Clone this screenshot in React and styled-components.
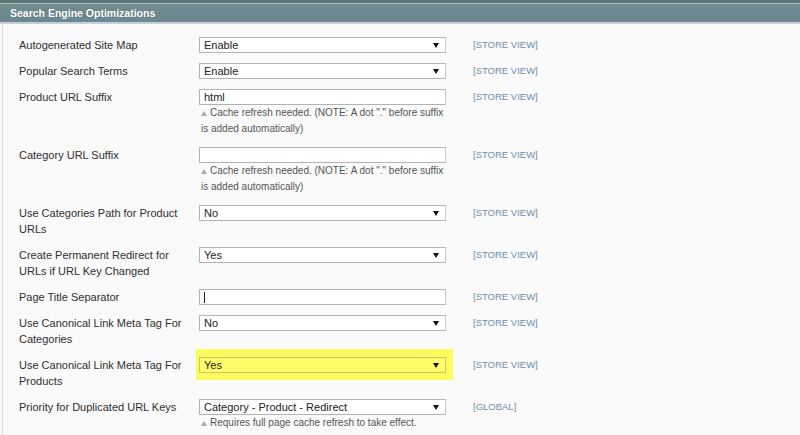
import React from 'react';
import styled, { createGlobalStyle } from 'styled-components';

const GlobalStyle = createGlobalStyle`
  html, body {
    margin: 0;
    padding: 0;
    background: #fafafa;
  }
  body {
    font-family: "Liberation Sans", Arial, sans-serif;
    width: 800px;
    height: 435px;
    overflow: hidden;
  }
`;

const Section = styled.div`
  width: 800px;
  height: 435px;
  display: flex;
  flex-direction: column;
`;

const Header = styled.div`
  height: 24px;
  box-sizing: border-box;
  background: linear-gradient(
    to bottom,
    #5b7579 0px,
    #5b7579 3px,
    #a9bcc0 3px,
    #a9bcc0 4px,
    #6f8b8d 4px,
    #6c8890 20px,
    #74869a 22px,
    #c6ced8 22px,
    #c6ced8 24px
  );
  color: #fff;
  font-weight: bold;
  font-size: 10.5px;
  line-height: 24px;
  padding: 1px 0 0 10px;
  text-shadow: 0 0 1px rgba(0, 0, 0, 0.25);
`;

const Body = styled.div`
  flex: 1;
  margin-left: 2px;
  border-left: 1px solid #dcdcdc;
  padding-top: 8px;
`;

const Row = styled.div`
  display: grid;
  grid-template-columns: 180px 247px 300px;
  padding: 5px 0 5px 16px;
  font-size: 11px;
  line-height: 16px;
  color: #2f2f2f;
`;

const Label = styled.div`
  padding-right: 10px;
`;

const ControlCell = styled.div`
  align-self: start;
  margin: ${(p) => (p.$highlight ? '-8px -7px -7px -3px' : '0')};
  padding: ${(p) => (p.$highlight ? '8px 7px 7px 3px' : '0')};
  background: ${(p) => (p.$highlight ? '#fbfb5e' : 'transparent')};
`;

const Field = styled.div`
  height: 16px;
  box-sizing: border-box;
  border: 1px solid #b3b3b3;
  border-right-color: #c8c8c8;
  background: #fff;
  display: flex;
  align-items: center;
  padding: 0 5px 0 4px;
  font-size: 11px;
  color: #222;
  ${(p) => p.$highlight && 'background: #fdfd6a; border-color: #c9c56a;'}
`;

const Value = styled.span`
  flex: 1;
  white-space: nowrap;
`;

const Arrow = styled.span`
  width: 0;
  height: 0;
  border-left: 3px solid transparent;
  border-right: 3px solid transparent;
  border-top: 5px solid #111;
  margin-right: 1px;
`;

const Caret = styled.span`
  width: 1px;
  height: 11px;
  background: #222;
`;

const Note = styled.div`
  padding-left: 2px;
  font-size: 10px;
  line-height: 16px;
  color: #555;
`;

const NoteIcon = styled.span`
  display: inline-block;
  width: 0;
  height: 0;
  border-left: 3px solid transparent;
  border-right: 3px solid transparent;
  border-bottom: 5px solid #aaa;
  margin-right: 3px;
`;

const Scope = styled.div`
  padding-left: 27px;
  font-size: 9.5px;
  line-height: 16px;
  color: #6f8daa;
`;

const rows = [
  { label: 'Autogenerated Site Map', type: 'select', value: 'Enable' },
  { label: 'Popular Search Terms', type: 'select', value: 'Enable' },
  {
    label: 'Product URL Suffix',
    type: 'input',
    value: 'html',
    note: ['Cache refresh needed. (NOTE: A dot "." before suffix', 'is added automatically)'],
  },
  {
    label: 'Category URL Suffix',
    type: 'input',
    value: '',
    note: ['Cache refresh needed. (NOTE: A dot "." before suffix', 'is added automatically)'],
  },
  { label: 'Use Categories Path for Product URLs', type: 'select', value: 'No' },
  { label: 'Create Permanent Redirect for URLs if URL Key Changed', type: 'select', value: 'Yes' },
  { label: 'Page Title Separator', type: 'input', value: '|', caret: true },
  { label: 'Use Canonical Link Meta Tag For Categories', type: 'select', value: 'No' },
  { label: 'Use Canonical Link Meta Tag For Products', type: 'select', value: 'Yes', highlight: true },
  {
    label: 'Priority for Duplicated URL Keys',
    type: 'select',
    value: 'Category - Product - Redirect',
    note: ['Requires full page cache refresh to take effect.'],
    scope: '[GLOBAL]',
  },
];

const ConfigRow = ({ row }) => (
  <Row>
    <Label>{row.label}</Label>
    <ControlCell $highlight={row.highlight}>
      <Field $highlight={row.highlight}>
        {row.caret ? <Caret /> : <Value>{row.value}</Value>}
        {row.type === 'select' && <Arrow />}
      </Field>
      {row.note && (
        <Note>
          {row.note.map((line, i) => (
            <div key={i}>
              {i === 0 && <NoteIcon />}
              {line}
            </div>
          ))}
        </Note>
      )}
    </ControlCell>
    <Scope>{row.scope || '[STORE VIEW]'}</Scope>
  </Row>
);

export default function App() {
  return (
    <>
      <GlobalStyle />
      <Section>
        <Header>Search Engine Optimizations</Header>
        <Body>
          {rows.map((row) => (
            <ConfigRow key={row.label} row={row} />
          ))}
        </Body>
      </Section>
    </>
  );
}
